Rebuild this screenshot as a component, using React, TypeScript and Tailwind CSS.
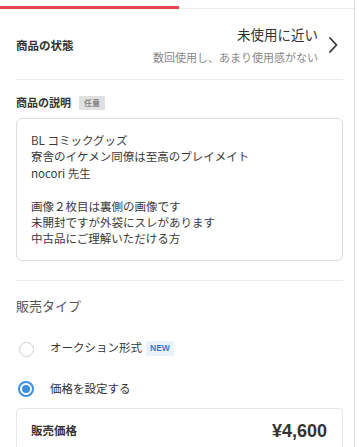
const jp = { fontFamily: '"Noto Sans CJK JP", "Noto Sans", sans-serif' };

const descLines = [
  'BL コミックグッズ',
  '寮舎のイケメン同僚は至高のプレイメイト',
  'nocori 先生',
  '',
  '画像２枚目は裏側の画像です',
  '未開封ですが外袋にスレがあります',
  '中古品にご理解いただける方',
];

function Chevron() {
  return (
    <svg width="10" height="18" viewBox="0 0 10 18" fill="none" className="ml-[10px] mr-[5px]">
      <path d="M2 2 L8.5 9 L2 16" stroke="#333" strokeWidth="1.8" strokeLinecap="round" strokeLinejoin="round" />
    </svg>
  );
}

export default function App() {
  return (
    <div className="w-[359px] h-[447px] overflow-hidden bg-white text-[#333]" style={jp}>
      <div className="w-[355px] h-full border-r border-[#dcdcdc]">
        {/* progress */}
        <div className="pt-[6px] flex items-end">
          <div className="w-[179px] h-[3px] bg-[#e4474f]" />
          <div className="flex-1 h-px bg-[#ececec]" />
        </div>

        <div className="pl-4 pr-[11px]">
          {/* condition */}
          <div className="flex items-center justify-between pt-4 pb-[14px] border-b border-[#ececec]">
            <div className="text-[11.5px] font-bold leading-4">商品の状態</div>
            <div className="flex items-center">
              <div className="flex flex-col items-end">
                <div className="text-[13.5px] leading-[18px]">未使用に近い</div>
                <div className="mt-[6px] text-[11px] leading-4 text-[#888]">数回使用し、あまり使用感がない</div>
              </div>
              <Chevron />
            </div>
          </div>

          {/* description */}
          <div className="mt-[14px] flex items-center h-4">
            <span className="text-[11px] font-bold">商品の説明</span>
            <span className="ml-[8px] mt-[2px] h-[14px] px-[5px] flex items-center bg-[#e0e0e0] text-[8px] text-[#555]">任意</span>
          </div>
          <div className="mt-2 h-[143px] border border-[#dcdcdc] rounded-[6px] pt-[13px] px-[14px] text-[11.5px] leading-[16.4px] text-[#3a3a3a]">
            {descLines.map((l, i) => (
              <div key={i} className="h-[16.4px]">{l}</div>
            ))}
          </div>

          <div className="mt-[19px] h-px bg-[#ececec]" />

          {/* sale type */}
          <div className="mt-4 text-[13px] leading-[18px] text-[#555]">販売タイプ</div>

          <div className="mt-[23px] flex items-center h-5">
            <span className="ml-[3px] w-[15px] h-[15px] rounded-full border-[1.5px] border-[#cfcfcf] mt-[3px]" />
            <span className="ml-[16px] text-[11.5px]">オークション形式</span>
            <span className="ml-[4px] h-[15px] px-[4px] flex items-center bg-[#eaf3fb] text-[8.5px] font-bold text-[#2f7fd0]" style={{ fontFamily: '"Liberation Sans", sans-serif' }}>NEW</span>
          </div>

          <div className="mt-[21px] flex items-center h-5">
            <span className="ml-[2px] w-4 h-4 rounded-full border-2 border-[#3d8fe6] flex items-center justify-center">
              <span className="w-[8px] h-[8px] rounded-full bg-[#3d8fe6]" />
            </span>
            <span className="ml-[16px] text-[11.5px]">価格を設定する</span>
          </div>

          {/* price */}
          <div className="mt-[9px] h-[60px] border border-[#e6e6e6] rounded-t-[4px] pt-[10px] pl-[14px] pr-[15px]">
            <div className="flex items-center justify-between h-6">
              <span className="text-[11.5px] font-bold">販売価格</span>
              <span className="text-[18px] font-bold" style={{ fontFamily: '"Liberation Sans", sans-serif' }}>¥4,600</span>
            </div>
          </div>
        </div>
      </div>
    </div>
  );
}
